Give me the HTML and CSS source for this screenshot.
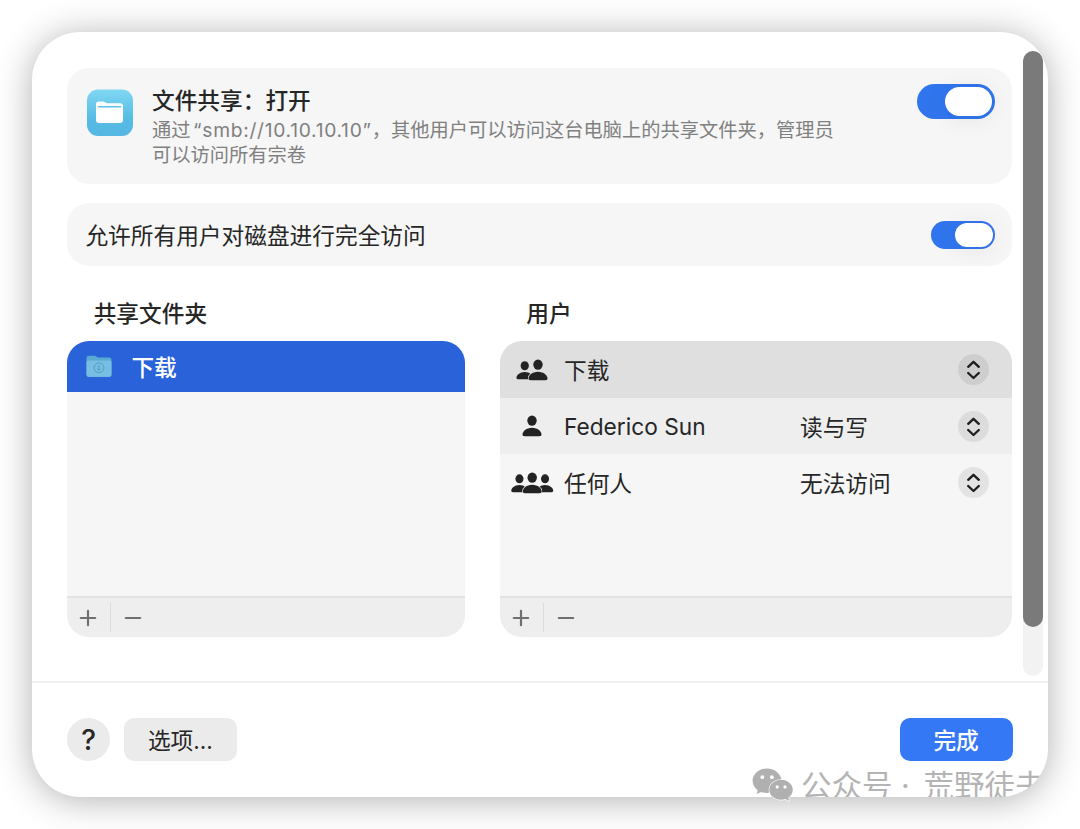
FILE: index.html
```html
<!DOCTYPE html>
<html lang="zh-CN">
<head>
    <meta charset="UTF-8">
    <meta name="viewport" content="width=device-width, initial-scale=1.0">
    <title>文件共享</title>
    <link rel="stylesheet" href="styles.css">
</head>
<body>
    <svg class="symbols" width="0" height="0">
        <symbol id="person" viewBox="0 0 20 22">
            <ellipse cx="10" cy="5.6" rx="4.7" ry="5.2"/>
            <path d="M2.6 21.2C1.2 21.2 .5 20.5 .5 19.5C.5 16.5 4.2 12.8 10 12.8S19.5 16.5 19.5 19.5C19.5 20.5 18.8 21.2 17.4 21.2Z"/>
        </symbol>
        <symbol id="updown" viewBox="0 0 31 31">
            <path d="M10.2 12.8L15.5 7.8L20.8 12.8M10.2 19L15.5 24L20.8 19" fill="none" stroke="#1f1f1f" stroke-width="2.4" stroke-linecap="round" stroke-linejoin="round"/>
        </symbol>
        <symbol id="plus" viewBox="0 0 18 18">
            <path d="M1.8 9H16.2M9 1.8V16.2" fill="none" stroke="#6f6f6f" stroke-width="2.2" stroke-linecap="round"/>
        </symbol>
        <symbol id="minus" viewBox="0 0 18 18">
            <path d="M1.8 9H16.2" fill="none" stroke="#6f6f6f" stroke-width="2.2" stroke-linecap="round"/>
        </symbol>
    </svg>

    <div class="window">
        <div class="content">
            <div class="card sharing">
                <svg class="app-icon" width="48" height="49" viewBox="0 0 48 49">
                    <defs>
                        <linearGradient id="appBlue" x1="0" y1="0" x2="0" y2="1">
                            <stop offset="0" stop-color="#80d7f3"/>
                            <stop offset=".65" stop-color="#56bbe4"/>
                            <stop offset="1" stop-color="#55b7e2"/>
                        </linearGradient>
                    </defs>
                    <rect x="1" y="1.5" width="46" height="46.5" rx="11" fill="url(#appBlue)"/>
                    <path d="M10 16.5Q10 13.5 13 13.5H17Q18.3 13.5 19.2 14.4Q20 15.2 21.5 15.2H34Q37 15.2 37 18.2V32Q37 35 34 35H13Q10 35 10 32Z" fill="#fff"/>
                    <path d="M12.5 18.7H34.7" stroke="#5fc3e8" stroke-width="1.5" stroke-linecap="round"/>
                </svg>
                <div class="sharing-text">
                    <h1>文件共享：打开</h1>
                    <p>通过<span class="address"> “smb://10.10.10.10”</span>，其他用户可以访问这台电脑上的共享文件夹，管理员<br>可以访问所有宗卷</p>
                </div>
                <div class="toggle large"></div>
            </div>

            <div class="card access">
                <span>允许所有用户对磁盘进行完全访问</span>
                <div class="toggle"></div>
            </div>

            <div class="lists">
                <div class="column">
                    <h2>共享文件夹</h2>
                    <div class="list">
                        <div class="folder selected">
                            <svg width="26" height="23" viewBox="0 0 26 23">
                                <path d="M.5 3Q.5 .8 2.7 .8H8.5Q9.8 .8 10.6 1.7Q11.3 2.4 12.5 2.4H23Q25.5 2.4 25.5 4.9V19.5Q25.5 22 23 22H3Q.5 22 .5 19.5Z" fill="#5aa9d2"/>
                                <path d="M.5 7.5Q.5 5.6 2.4 5.6H23.6Q25.5 5.6 25.5 7.5V19.5Q25.5 21.8 23.2 21.8H2.8Q.5 21.8 .5 19.5Z" fill="#78bee2"/>
                                <g fill="none" stroke="#4f9dc8">
                                    <circle cx="13" cy="12.8" r="4.9"/>
                                    <path d="M13 10V15.3M11.2 13.6L13 15.4L14.8 13.6"/>
                                </g>
                            </svg>
                            <span>下载</span>
                        </div>
                        <div class="toolbar">
                            <svg><use href="#plus"/></svg>
                            <i></i>
                            <svg><use href="#minus"/></svg>
                        </div>
                    </div>
                </div>

                <div class="column users">
                    <h2>用户</h2>
                    <div class="list">
                        <div class="user dark">
                            <svg class="people" width="44" height="22" viewBox="0 0 44 22">
                                <use href="#person" x="6" y="1.8" width="17.5" height="19.25"/>
                                <use href="#person" x="18" y="0" width="20" height="22" stroke="#dfdfdf" stroke-width="1.6" paint-order="stroke"/>
                            </svg>
                            <span class="name">下载</span>
                            <span class="right"></span>
                            <svg class="stepper"><use href="#updown"/></svg>
                        </div>
                        <div class="user mid">
                            <svg class="people" width="44" height="22" viewBox="0 0 44 22">
                                <use href="#person" x="12" y="0" width="20" height="22"/>
                            </svg>
                            <span class="name">Federico Sun</span>
                            <span class="right">读与写</span>
                            <svg class="stepper"><use href="#updown"/></svg>
                        </div>
                        <div class="user">
                            <svg class="people" width="44" height="22" viewBox="0 0 44 22">
                                <use href="#person" x=".8" y="2" width="17.3" height="19"/>
                                <use href="#person" x="26.4" y="2" width="17.3" height="19"/>
                                <use href="#person" x="12.2" y="0" width="20" height="22" stroke="#f6f6f6" stroke-width="1.6" paint-order="stroke"/>
                            </svg>
                            <span class="name">任何人</span>
                            <span class="right">无法访问</span>
                            <svg class="stepper"><use href="#updown"/></svg>
                        </div>
                        <div class="toolbar">
                            <svg><use href="#plus"/></svg>
                            <i></i>
                            <svg><use href="#minus"/></svg>
                        </div>
                    </div>
                </div>
            </div>
        </div>

        <div class="footer">
            <button class="help">?</button>
            <button class="options">选项...</button>
            <button class="done">完成</button>
        </div>

        <div class="scrollbar"><div class="thumb"></div></div>
        <div class="watermark"><span>公众号 ·</span> 荒野徒夫</div>
    </div>

    <svg class="wechat" width="42" height="34" viewBox="0 0 42 34">
        <path d="M15 .5C7 .5 .6 6 .6 12.8C.6 16.7 2.6 20 5.7 22.3L4.6 26L9.2 23.9C11 24.5 13 24.9 15 24.9C23 24.9 29.4 19.5 29.4 12.8S23 .5 15 .5Z" fill="#b0b0b0"/>
        <path d="M29 11.8C22.5 11.8 17.3 16.2 17.3 21.8S22.5 31.8 29 31.8C30.6 31.8 32 31.6 33.3 31.1L37.2 33L36.3 29.8C39 27.9 40.8 25 40.8 21.8C40.8 16.2 35.5 11.8 29 11.8Z" fill="#b0b0b0" stroke="#fff" stroke-width="1.2" paint-order="stroke"/>
        <g fill="#fff">
            <circle cx="10.3" cy="9.2" r="1.9"/>
            <circle cx="19.9" cy="9.2" r="1.9"/>
            <circle cx="25.2" cy="18.9" r="1.6"/>
            <circle cx="33" cy="18.9" r="1.6"/>
        </g>
    </svg>
</body>
</html>
```
FILE: styles.css
```css
* {
    box-sizing: border-box;
}
body {
    margin: 0;
    padding: 32px;
    height: 829px;
    overflow: hidden;
    position: relative;
    background: #fff;
    color: #262626;
    font-family: Inter, "Noto Sans CJK SC", sans-serif;
    font-size: 22.7px;
}
h1, h2, p {
    margin: 0;
}
.symbols {
    position: absolute;
}
.window {
    position: relative;
    width: 1016px;
    height: 765px;
    display: flex;
    flex-direction: column;
    background: #fff;
    border-radius: 48px;
    overflow: hidden;
    box-shadow: 0 3px 36px rgba(0, 0, 0, 0.31);
}
.content {
    height: 651px;
    padding: 36px 36px 0 35.4px;
    border-bottom: 2px solid #f0f0f0;
}
.card {
    background: #f6f6f6;
    border-radius: 22px;
    display: flex;
}
.sharing {
    height: 116px;
    padding: 16px 17px 0 18.6px;
}
.app-icon {
    margin-top: 4px;
}
.sharing-text {
    flex: 1;
    padding-left: 18px;
}
h1 {
    font-size: 22.7px;
    font-weight: 500;
    line-height: 34px;
}
.sharing-text p {
    color: #808080;
    font-size: 19.25px;
    line-height: 25px;
    white-space: nowrap;
}
.address {
    letter-spacing: 0.7px;
    word-spacing: -3.5px;
}
.access {
    height: 63px;
    margin-top: 19px;
    padding: 0 17px 0 18px;
    align-items: center;
    justify-content: space-between;
}
.toggle {
    width: 64px;
    height: 28px;
    padding: 2px;
    border-radius: 14px;
    background: #3175ee;
    display: flex;
    justify-content: flex-end;
}
.toggle::after {
    content: "";
    width: 38px;
    border-radius: 12px;
    background: #fff;
    box-shadow: 0 2px 25px rgba(0, 0, 0, 0.08);
}
.toggle.large {
    width: 78px;
    height: 35px;
    padding: 3px;
    border-radius: 18px;
}
.toggle.large::after {
    width: 47px;
    border-radius: 15px;
}
.lists {
    display: flex;
    gap: 35px;
    margin-top: 32px;
}
.column {
    width: 397.6px;
}
.users {
    width: 512px;
}
h2 {
    padding-left: 26.3px;
    font-size: 22.7px;
    font-weight: 500;
    line-height: 32px;
}
.list {
    height: 296px;
    margin-top: 11px;
    display: flex;
    flex-direction: column;
    background: #f6f6f6;
    border-radius: 22px;
    overflow: hidden;
}
.folder {
    height: 51px;
    padding: 0 18.6px;
    display: flex;
    align-items: center;
    gap: 19.4px;
    color: #fff;
    font-weight: 500;
}
.folder.selected {
    background: #2962d9;
}
.toolbar {
    height: 41px;
    margin-top: auto;
    padding: 0 12px;
    display: flex;
    align-items: center;
    background: #eee;
    border-top: 2px solid #e2e2e2;
}
.toolbar svg {
    width: 18px;
    height: 18px;
}
.toolbar i {
    width: 1px;
    height: 29px;
    margin: 0 13px;
    background: #dcdcdc;
}
.user {
    height: 56.6px;
    padding: 1px 23px 0 10px;
    display: flex;
    align-items: center;
}
.user.dark {
    background: #dfdfdf;
}
.user.mid {
    background: #eee;
}
.people {
    fill: #232323;
}
.name {
    width: 236px;
    margin-left: 10px;
}
.right {
    flex: 1;
}
.stepper {
    width: 31px;
    height: 31px;
    border-radius: 50%;
    background: rgba(0, 0, 0, 0.075);
}
.footer {
    flex: 1;
    padding: 35px 35.4px 0;
    display: flex;
}
button {
    width: 113px;
    height: 43px;
    padding: 0;
    border: none;
    border-radius: 10px;
    background: #ebebeb;
    color: #262626;
    font: inherit;
}
.help {
    width: 42.5px;
    border-radius: 50%;
    font-size: 28px;
    font-weight: 500;
}
.options {
    margin-left: 14px;
}
.done {
    margin-left: auto;
    background: #3478f6;
    color: #fff;
    font-weight: 500;
}
.scrollbar {
    position: absolute;
    top: 19px;
    left: 991px;
    width: 20px;
    height: 625px;
    border-radius: 10px;
    background: #f2f2f2;
}
.thumb {
    height: 576px;
    border-radius: 10px;
    background: #7a7a7a;
}
.watermark {
    position: absolute;
    top: 732px;
    left: 769px;
    color: #b4b4b4;
    font-size: 30.5px;
    line-height: 44px;
    white-space: nowrap;
}
.watermark span {
    margin-right: 5px;
}
.wechat {
    position: absolute;
    left: 752px;
    top: 768px;
}
```
